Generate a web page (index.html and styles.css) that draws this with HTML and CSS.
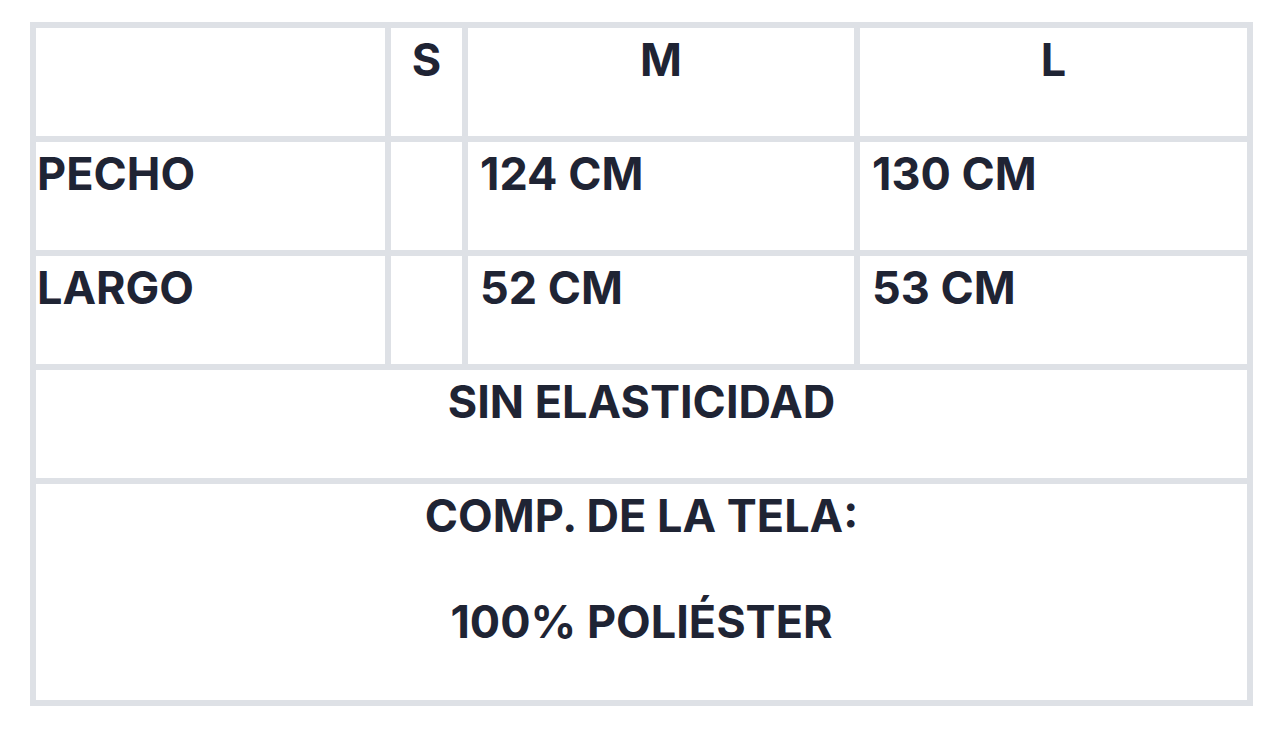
FILE: index.html
```html
<!DOCTYPE html>
<html lang="es">
<head>
<meta charset="utf-8">
<title>Tabla de medidas</title>
<link rel="stylesheet" href="styles.css">
</head>
<body>
<div class="chart">
  <div class="cell"></div>
  <div class="cell center">S</div>
  <div class="cell center">M</div>
  <div class="cell center">L</div>

  <div class="cell label">PECHO</div>
  <div class="cell"></div>
  <div class="cell value">124 CM</div>
  <div class="cell value">130 CM</div>

  <div class="cell label">LARGO</div>
  <div class="cell"></div>
  <div class="cell value">52 CM</div>
  <div class="cell value">53 CM</div>

  <div class="cell full center">SIN ELASTICIDAD</div>

  <div class="cell full center tall">COMP. DE LA TELA:<br><br>100% POLIÉSTER</div>
</div>
</body>
</html>
```

FILE: styles.css
```css
html, body {
  margin: 0;
  padding: 0;
  background: #ffffff;
}

body {
  padding: 22px 0 0 30px;
  font-family: Inter, "Liberation Sans", Arial, sans-serif;
  color: #1f2434;
}

.chart {
  display: grid;
  grid-template-columns: 349px 71px 386px 387px;
  grid-auto-rows: minmax(108px, auto);
  gap: 6px;
  padding: 6px;
  width: max-content;
  background: #dee1e6;
}

.cell {
  background: #ffffff;
  font-size: 45px;
  font-weight: 700;
  line-height: 54px;
  padding-top: 5px;
  padding-bottom: 49px;
  white-space: nowrap;
}

.center {
  text-align: center;
}

.label {
  padding-left: 1px;
}

.value {
  padding-left: 12px;
}

.full {
  grid-column: 1 / -1;
}

.tall {
  line-height: 53px;
  padding-bottom: 52px;
}
```
